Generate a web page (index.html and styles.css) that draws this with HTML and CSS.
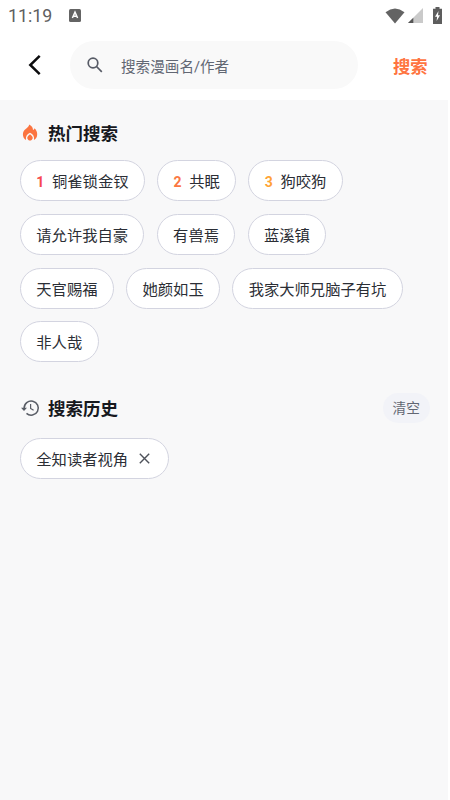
FILE: index.html
```html
<!DOCTYPE html>
<html lang="zh-CN">
<head>
<meta charset="utf-8">
<title>搜索</title>
<link rel="stylesheet" href="styles.css">
</head>
<body>
<div class="status">
  <span class="clock">11:19</span>
  <svg class="app-badge" width="12" height="13" viewBox="0 0 12 13"><rect width="12" height="13" rx="1.5" fill="#646464"/><path d="M3.4 9 6 3.2 8.6 9M4.4 7.3h3.2" fill="none" stroke="#fff" stroke-width="1.5"/></svg>
  <div class="indicators">
    <svg width="20" height="16" viewBox="0 0 20 16"><path d="M.5 4.2Q10-3 19.500 4.200L10 15.500Z" fill="#636363"/></svg>
    <svg class="signal" width="15" height="15" viewBox="0 0 15 15"><path d="M15 0V15H0Z" fill="#cacaca"/><path d="M5.300 9.700V15H0Z" fill="#555"/></svg>
    <svg class="battery" width="9" height="17" viewBox="0 0 9 17"><path d="M2.500 0h4v1.700H9V17H0V1.700h2.500Z" fill="#5d5d5d"/><path d="M5.500 4 2 9.700h2.100L3.600 14 7 8.200H5Z" fill="#fff"/></svg>
  </div>
</div>
<header class="topbar">
  <svg class="back" width="14" height="22" viewBox="0 0 14 22"><path d="M11.700 1.800 2.300 11l9.400 9.200" fill="none" stroke="#0c0c0e" stroke-width="2.500"/></svg>
  <div class="search-box">
    <svg width="16" height="16" viewBox="0 0 16 16" fill="none" stroke="#575b66" stroke-width="1.700"><circle cx="6" cy="6" r="4.800"/><path d="m9.500 9.500 5.300 5.300"/></svg>
    <span>搜索漫画名/作者</span>
  </div>
  <span class="submit">搜索</span>
</header>
<main>
  <section class="hot">
    <div class="heading">
      <svg class="heading-icon flame" width="20" height="20" viewBox="0 0 20 20"><path fill="#fb7440" d="M9.200 1.500C12 3 13 4.800 13 6.900 13.900 6.800 14.300 6.200 14.500 5.300 16.300 6.800 17.200 9 17.200 11.200 17.200 13.900 16 15.900 14 17 14.500 13.200 13.200 11.200 10 9.700 6.800 11.200 5.500 13.200 6 17 4 15.900 2.900 13.900 2.900 11.300 2.900 8.900 4 7.500 5.700 6 7.400 4.600 8.800 3.800 9.200 1.500Z"/><path fill="#fb7440" d="M10 11.300 12 12.900A2.700 2.700 0 1 1 8 12.900Z"/></svg>
      <h2>热门搜索</h2>
    </div>
    <div class="chips">
      <span class="chip"><b class="rank first">1</b>铜雀锁金钗</span>
      <span class="chip"><b class="rank second">2</b>共眠</span>
      <span class="chip"><b class="rank third">3</b>狗咬狗</span>
      <span class="chip">请允许我自豪</span>
      <span class="chip">有兽焉</span>
      <span class="chip">蓝溪镇</span>
      <span class="chip">天官赐福</span>
      <span class="chip">她颜如玉</span>
      <span class="chip">我家大师兄脑子有坑</span>
      <span class="chip">非人哉</span>
    </div>
  </section>
  <section class="history">
    <div class="heading">
      <svg class="heading-icon" width="20" height="20" viewBox="0 0 20 20" fill="none" stroke="#595d66" stroke-width="1.500"><path d="M4.100 10.200A7.100 7.100 0 1 1 6.500 15.400"/><path d="M10.600 6.100v4.300l3 1.900" stroke-width="1.200"/><path d="M1 9.700h6L4 12.900Z" fill="#595d66" stroke="none"/></svg>
      <h2>搜索历史</h2>
      <span class="clear">清空</span>
    </div>
    <div class="chips">
      <span class="chip">全知读者视角<svg class="remove" width="11" height="11" viewBox="0 0 11 11"><path d="m.8.8 9.400 9.400m0-9.400L.8 10.200" stroke="#4e525a" stroke-width="1.400"/></svg></span>
    </div>
  </section>
</main>
</body>
</html>
```
FILE: styles.css
```css
* {
  box-sizing: border-box;
}

body {
  margin: 0;
  height: 800px;
  display: flex;
  flex-direction: column;
  overflow: hidden;
  background: #fff;
  color: #2b2e35;
  font-family: Roboto, "Noto Sans CJK SC", sans-serif;
}

.status {
  height: 30px;
  display: flex;
  align-items: center;
  padding: 1px 8px 0 8px;
}

.clock {
  width: 60px;
  font-size: 17.8px;
  line-height: 20px;
  color: #5f5f5f;
}

.app-badge {
  margin-left: 1px;
}

.indicators {
  display: flex;
  align-items: center;
  margin-left: auto;
}

.signal {
  margin-left: 3px;
}

.battery {
  margin-left: 10px;
}

.topbar {
  height: 70px;
  display: flex;
  align-items: center;
  padding: 0 22px 0 28px;
}

.back {
  margin-top: -1px;
}

.search-box {
  width: 288px;
  height: 48px;
  margin: 0 35px 0 28px;
  display: flex;
  align-items: center;
  gap: 18px;
  padding: 0 17px;
  border-radius: 24px;
  background: #f9f9f9;
  color: #626773;
  font-size: 14.6px;
}

.search-box svg {
  margin-top: -1px;
}

.submit {
  color: #ff7440;
  font-size: 17.3px;
  font-weight: 700;
  white-space: nowrap;
}

main {
  flex: 1;
  margin-right: 2px;
  padding: 20px 18px 0 20px;
  background: #f8f8f9;
}

.heading {
  height: 28px;
  display: flex;
  align-items: center;
}

.heading-icon {
  margin-right: 8px;
}

.flame {
  margin-top: -3px;
}

h2 {
  margin: 0;
  font-size: 17.5px;
  line-height: 26px;
  font-weight: 700;
  color: #17191e;
}

.chips {
  display: flex;
  flex-wrap: wrap;
  gap: 12.8px 12.4px;
  margin-top: 12px;
}

.chip {
  height: 41px;
  display: flex;
  align-items: center;
  padding: 3px 15.3px 0;
  border: 1px solid #d3d4e0;
  border-radius: 21px;
  background: #fff;
  font-size: 15.3px;
  line-height: 22px;
  white-space: nowrap;
}

.rank {
  width: 15.7px;
  margin-top: -1px;
  font-size: 14px;
}

.first {
  color: #f7484d;
}

.second {
  color: #fb7742;
}

.third {
  color: #ffa336;
}

.history {
  margin-top: 31.6px;
}

.history h2 {
  padding-top: 2px;
}

.history .chips {
  margin-top: 16px;
}

.clear {
  height: 30px;
  margin-left: auto;
  padding: 0 10px;
  border-radius: 15px;
  background: #f2f3f8;
  color: #626773;
  font-size: 13.7px;
  line-height: 30px;
}

.remove {
  margin: -3px 3px 0 11px;
}
```
